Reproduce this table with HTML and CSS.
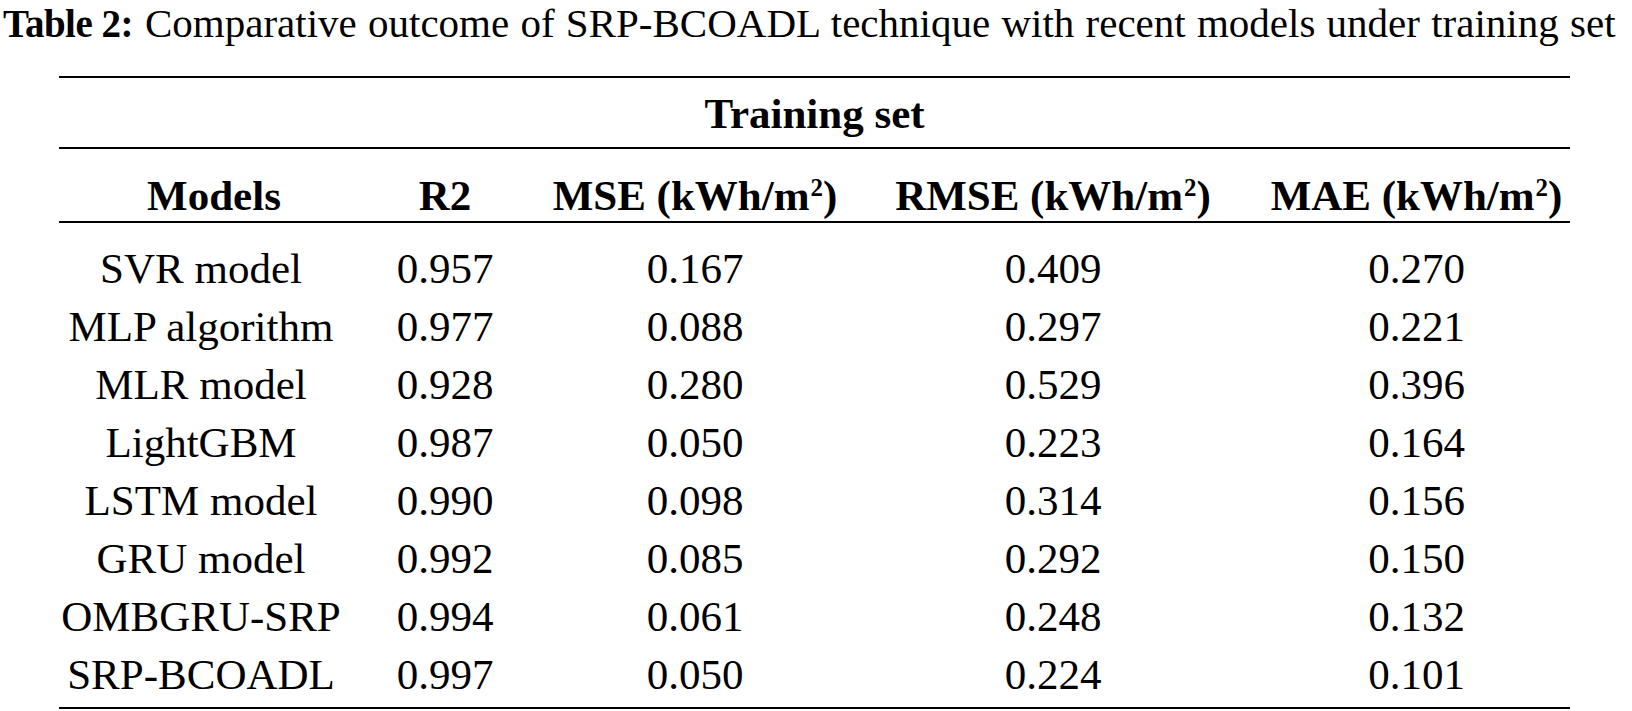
FILE: index.html
```html
<!DOCTYPE html>
<html lang="en">
<head>
<meta charset="utf-8">
<title>Table 2</title>
<link rel="stylesheet" href="styles.css">
</head>
<body>
<div class="page">
  <p class="caption"><span class="label">Table 2:</span><span class="title">Comparative outcome of SRP-BCOADL technique with recent models under training set</span></p>
  <table class="results">
    <colgroup>
      <col class="c-model">
      <col class="c-r2">
      <col class="c-mse">
      <col class="c-rmse">
      <col class="c-mae">
    </colgroup>
    <thead>
      <tr class="group"><th colspan="5">Training set</th></tr>
      <tr class="cols">
        <th class="models">Models</th>
        <th>R2</th>
        <th>MSE (kWh/m<sup>2</sup>)</th>
        <th>RMSE (kWh/m<sup>2</sup>)</th>
        <th>MAE (kWh/m<sup>2</sup>)</th>
      </tr>
    </thead>
    <tbody>
      <tr><td>SVR model</td><td>0.957</td><td>0.167</td><td>0.409</td><td>0.270</td></tr>
      <tr><td>MLP algorithm</td><td>0.977</td><td>0.088</td><td>0.297</td><td>0.221</td></tr>
      <tr><td>MLR model</td><td>0.928</td><td>0.280</td><td>0.529</td><td>0.396</td></tr>
      <tr><td>LightGBM</td><td>0.987</td><td>0.050</td><td>0.223</td><td>0.164</td></tr>
      <tr><td>LSTM model</td><td>0.990</td><td>0.098</td><td>0.314</td><td>0.156</td></tr>
      <tr><td>GRU model</td><td>0.992</td><td>0.085</td><td>0.292</td><td>0.150</td></tr>
      <tr><td>OMBGRU-SRP</td><td>0.994</td><td>0.061</td><td>0.248</td><td>0.132</td></tr>
      <tr><td>SRP-BCOADL</td><td>0.997</td><td>0.050</td><td>0.224</td><td>0.101</td></tr>
    </tbody>
  </table>
</div>
</body>
</html>
```

FILE: styles.css
```css
html, body {
  margin: 0;
  padding: 0;
  background: #ffffff;
}

body {
  color: #000000;
  font-family: "Liberation Serif", "Times New Roman", serif;
}

.page {
  width: 1632px;
}

.caption {
  margin: 0;
  padding-left: 3px;
  font-size: 41px;
  line-height: 46px;
  white-space: nowrap;
}

.caption .label {
  font-weight: bold;
  font-size: 39px;
  letter-spacing: -0.5px;
  margin-right: 12px;
}

.caption .title {
  word-spacing: 1px;
}

.results {
  margin: 29px 0 0 59px;
  width: 1511px;
  table-layout: fixed;
  border-collapse: separate;
  border-spacing: 0;
  border-top: 2px solid #000000;
  border-bottom: 2px solid #000000;
  font-size: 43px;
}

.c-model { width: 284px; }
.c-r2 { width: 204px; }
.c-mse { width: 296px; }
.c-rmse { width: 420px; }
.c-mae { width: 307px; }

.results th,
.results td {
  padding: 0;
  text-align: center;
  white-space: nowrap;
}

.results th {
  font-weight: bold;
  line-height: 48px;
}

.group th {
  padding-top: 12px;
  padding-bottom: 9px;
  border-bottom: 2px solid #000000;
}

.cols th {
  padding-top: 23px;
  padding-bottom: 1px;
  border-bottom: 2px solid #000000;
}

.cols th.models {
  padding-left: 26px;
}

.results sup {
  font-size: 0.58em;
  line-height: 0;
  vertical-align: 0.56em;
  margin-left: 1px;
}

.results td {
  line-height: 58px;
  font-weight: normal;
}

.results tbody tr:first-child td {
  padding-top: 17px;
}

.results tbody tr:last-child td {
  padding-bottom: 3px;
}
```
